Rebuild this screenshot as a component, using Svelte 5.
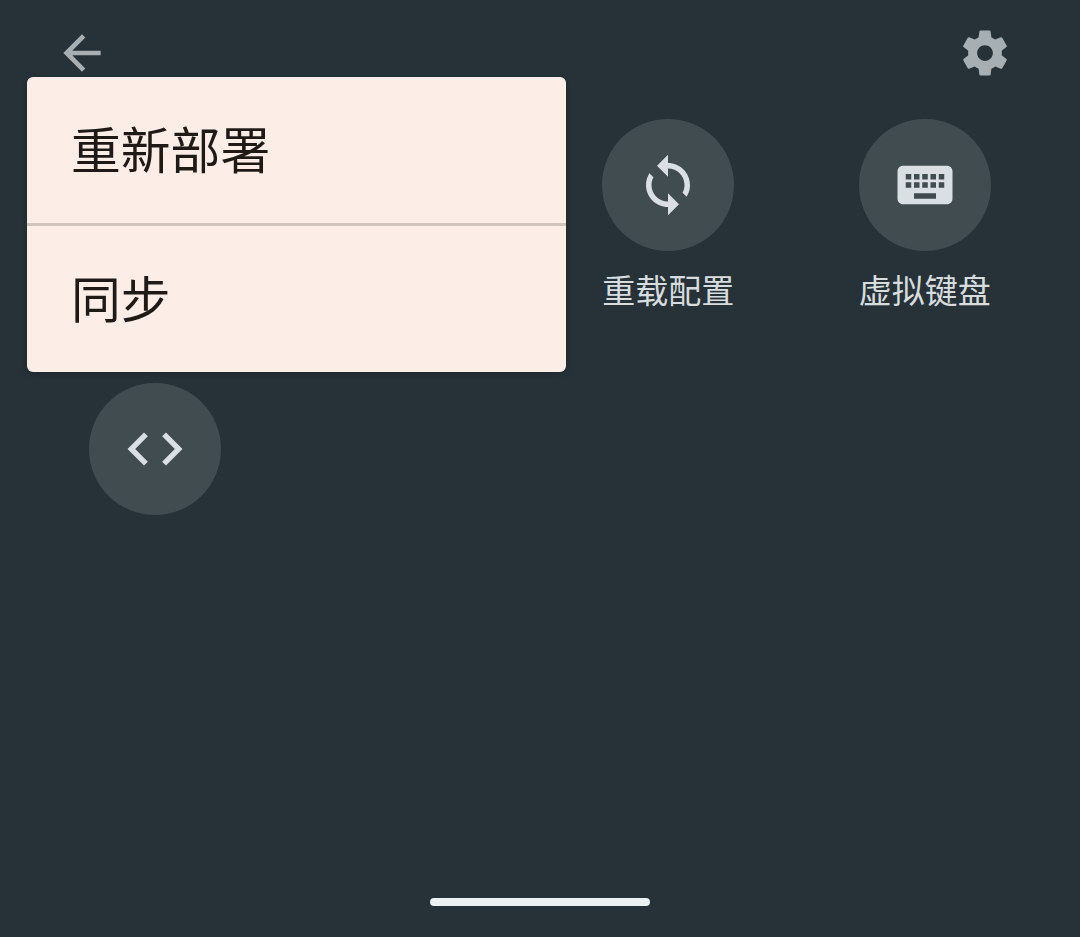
<script>
  const arrowBack = 'M20 11H7.83l5.59-5.59L12 4l-8 8 8 8 1.41-1.41L7.83 13H20v-2z';
  const settings = 'M19.43 12.98c.04-.32.07-.64.07-.98s-.03-.66-.07-.98l2.11-1.65c.19-.15.24-.42.12-.64l-2-3.46c-.12-.22-.39-.3-.61-.22l-2.49 1c-.52-.4-1.08-.73-1.69-.98l-.38-2.65C14.46 2.18 14.25 2 14 2h-4c-.25 0-.46.18-.49.42l-.38 2.65c-.61.25-1.17.59-1.69.98l-2.49-1c-.23-.09-.49 0-.61.22l-2 3.46c-.13.22-.07.49.12.64l2.11 1.65c-.04.32-.07.65-.07.98s.03.66.07.98l-2.11 1.65c-.19.15-.24.42-.12.64l2 3.46c.12.22.39.3.61.22l2.49-1c.52.4 1.08.73 1.69.98l.38 2.65c.03.24.24.42.49.42h4c.25 0 .46-.18.49-.42l.38-2.65c.61-.25 1.17-.59 1.69-.98l2.49 1c.23.09.49 0 .61-.22l2-3.46c.12-.22.07-.49-.12-.64l-2.11-1.65zM12 15.5c-1.93 0-3.5-1.57-3.5-3.5s1.57-3.5 3.5-3.5 3.5 1.57 3.5 3.5-1.57 3.5-3.5 3.5z';

  const tiles = [
    {
      name: 'reload',
      label: '重载配置',
      icon: 'M12 4V1L8 5l4 4V6c3.31 0 6 2.69 6 6 0 1.01-.25 1.97-.7 2.8l1.46 1.46C19.54 15.03 20 13.57 20 12c0-4.42-3.58-8-8-8zm0 14c-3.31 0-6-2.69-6-6 0-1.01.25-1.97.7-2.8L5.24 7.74C4.46 8.97 4 10.43 4 12c0 4.42 3.58 8 8 8v3l4-4-4-4v3z'
    },
    {
      name: 'keyboard',
      label: '虚拟键盘',
      icon: 'M20 5H4c-1.1 0-1.99.9-1.99 2L2 17c0 1.1.9 2 2 2h16c1.1 0 2-.9 2-2V7c0-1.1-.9-2-2-2zm-9 3h2v2h-2V8zm0 3h2v2h-2v-2zM8 8h2v2H8V8zm0 3h2v2H8v-2zm-1 2H5v-2h2v2zm0-3H5V8h2v2zm9 7H8v-2h8v2zm0-4h-2v-2h2v2zm0-3h-2V8h2v2zm3 3h-2v-2h2v2zm0-3h-2V8h2v2z'
    },
    {
      name: 'code',
      label: '',
      icon: 'M9.4 16.6L4.8 12l4.6-4.6L8 6l-6 6 6 6 1.4-1.4zm5.2 0l4.6-4.6-4.6-4.6L16 6l6 6-6 6-1.4-1.4z'
    }
  ];

  const menu = ['重新部署', '同步'];
</script>

<div class="panel">
  <header class="bar">
    <svg class="bar-icon" viewBox="0 0 24 24"><path d={arrowBack} /></svg>
    <svg class="bar-icon" viewBox="0 0 24 24"><path d={settings} /></svg>
  </header>

  <main class="grid">
    {#each tiles as tile}
      <div class="tile {tile.name}">
        <div class="circle">
          <svg viewBox="0 0 24 24"><path d={tile.icon} /></svg>
        </div>
        <span class="label">{tile.label}</span>
      </div>
    {/each}
  </main>

  <footer class="nav"><div class="handle"></div></footer>

  <div class="menu">
    {#each menu as item}
      <div class="menu-item">{item}</div>
    {/each}
  </div>
</div>

<style>
  :global(body) {
    margin: 0;
    background: #263238;
  }

  .panel {
    position: relative;
    display: flex;
    flex-direction: column;
    box-sizing: border-box;
    width: 1080px;
    height: 937px;
    overflow: hidden;
    background: #263238;
    font-family: "Noto Sans CJK SC", sans-serif;
  }

  .bar {
    display: flex;
    align-items: center;
    justify-content: space-between;
    box-sizing: border-box;
    height: 106px;
    padding: 0 68px 0 54px;
  }

  .bar-icon {
    width: 56px;
    height: 56px;
    fill: #a8afb3;
  }

  .bar-icon:last-child {
    width: 54px;
    height: 54px;
  }

  .grid {
    flex: 1;
    display: grid;
    grid-template-columns: repeat(4, 1fr);
    grid-auto-rows: 264px;
    padding: 13px 27px 0;
  }

  .tile {
    display: flex;
    flex-direction: column;
    align-items: center;
  }

  .reload {
    grid-column: 3;
  }

  .code {
    grid-column: 1;
  }

  .circle {
    display: flex;
    align-items: center;
    justify-content: center;
    width: 132px;
    height: 132px;
    border-radius: 50%;
    background: #414c50;
  }

  .circle svg {
    width: 66px;
    height: 66px;
    fill: #dadfe3;
  }

  .label {
    margin-top: 14px;
    color: #d7dcdf;
    font-size: 33px;
    line-height: 48px;
  }

  .nav {
    display: flex;
    justify-content: center;
    height: 39px;
  }

  .handle {
    width: 220px;
    height: 8px;
    border-radius: 4px;
    background: #ebf0f2;
  }

  .menu {
    position: absolute;
    top: 77px;
    left: 27px;
    width: 539px;
    border-radius: 6px;
    overflow: hidden;
    background: #fceee7;
    box-shadow: 0 2px 6px rgba(0, 0, 0, 0.2);
  }

  .menu-item {
    box-sizing: border-box;
    height: 146px;
    padding: 0 44px;
    color: #201a17;
    font-size: 49.8px;
    line-height: 140px;
  }

  .menu-item + .menu-item {
    height: 149px;
    border-top: 3px solid #d2c5be;
  }
</style>
